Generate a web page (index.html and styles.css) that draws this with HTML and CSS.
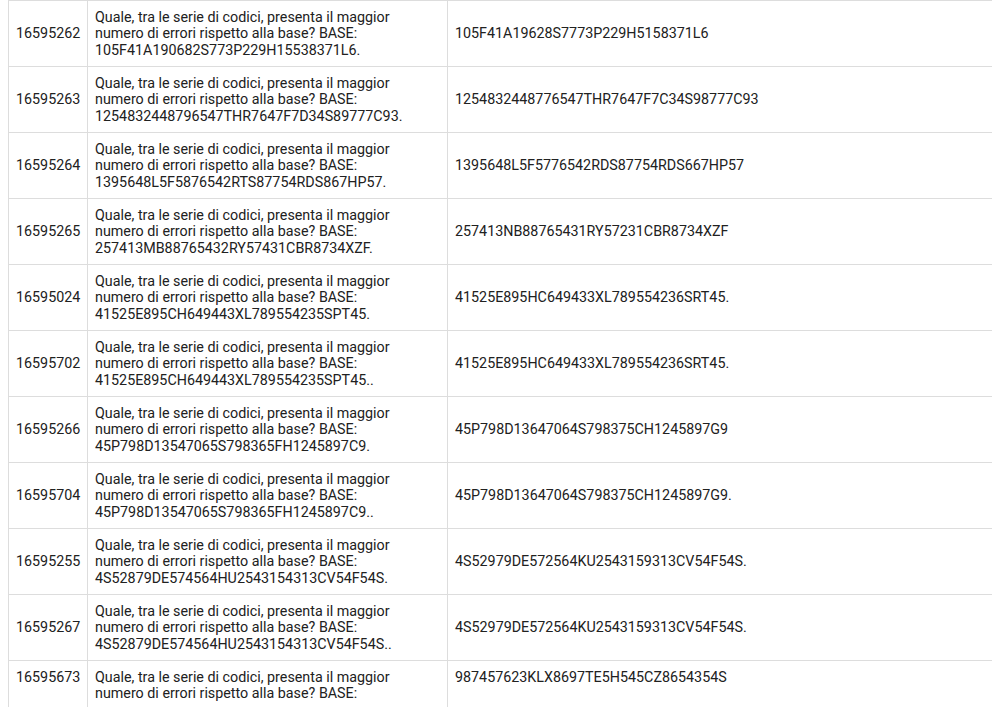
FILE: index.html
```html
<!DOCTYPE html>
<html lang="it">
<head>
  <meta charset="UTF-8" />
  <title>Domande - Serie di codici</title>
  <link rel="stylesheet" href="styles.css">
</head>
<body>

<table class="quiz">
  <colgroup>
    <col class="col-id">
    <col class="col-domanda">
    <col class="col-risposta">
  </colgroup>
  <tbody>
    <tr>
      <td>16595262</td>
      <td>Quale, tra le serie di codici, presenta il maggior numero di errori rispetto alla base? BASE: 105F41A190682S773P229H15538371L6.</td>
      <td>105F41A19628S7773P229H5158371L6</td>
    </tr>
    <tr>
      <td>16595263</td>
      <td>Quale, tra le serie di codici, presenta il maggior numero di errori rispetto alla base? BASE: 1254832448796547THR7647F7D34S89777C93.</td>
      <td>1254832448776547THR7647F7C34S98777C93</td>
    </tr>
    <tr>
      <td>16595264</td>
      <td>Quale, tra le serie di codici, presenta il maggior numero di errori rispetto alla base? BASE: 1395648L5F5876542RTS87754RDS867HP57.</td>
      <td>1395648L5F5776542RDS87754RDS667HP57</td>
    </tr>
    <tr>
      <td>16595265</td>
      <td>Quale, tra le serie di codici, presenta il maggior numero di errori rispetto alla base? BASE: 257413MB88765432RY57431CBR8734XZF.</td>
      <td>257413NB88765431RY57231CBR8734XZF</td>
    </tr>
    <tr>
      <td>16595024</td>
      <td>Quale, tra le serie di codici, presenta il maggior numero di errori rispetto alla base? BASE: 41525E895CH649443XL789554235SPT45.</td>
      <td>41525E895HC649433XL789554236SRT45.</td>
    </tr>
    <tr>
      <td>16595702</td>
      <td>Quale, tra le serie di codici, presenta il maggior numero di errori rispetto alla base? BASE: 41525E895CH649443XL789554235SPT45..</td>
      <td>41525E895HC649433XL789554236SRT45.</td>
    </tr>
    <tr>
      <td>16595266</td>
      <td>Quale, tra le serie di codici, presenta il maggior numero di errori rispetto alla base? BASE: 45P798D13547065S798365FH1245897C9.</td>
      <td>45P798D13647064S798375CH1245897G9</td>
    </tr>
    <tr>
      <td>16595704</td>
      <td>Quale, tra le serie di codici, presenta il maggior numero di errori rispetto alla base? BASE: 45P798D13547065S798365FH1245897C9..</td>
      <td>45P798D13647064S798375CH1245897G9.</td>
    </tr>
    <tr>
      <td>16595255</td>
      <td>Quale, tra le serie di codici, presenta il maggior numero di errori rispetto alla base? BASE: 4S52879DE574564HU2543154313CV54F54S.</td>
      <td>4S52979DE572564KU2543159313CV54F54S.</td>
    </tr>
    <tr>
      <td>16595267</td>
      <td>Quale, tra le serie di codici, presenta il maggior numero di errori rispetto alla base? BASE: 4S52879DE574564HU2543154313CV54F54S..</td>
      <td>4S52979DE572564KU2543159313CV54F54S.</td>
    </tr>
    <tr class="top">
      <td>16595673</td>
      <td>Quale, tra le serie di codici, presenta il maggior numero di errori rispetto alla base? BASE:</td>
      <td>987457623KLX8697TE5H545CZ8654354S</td>
    </tr>
  </tbody>
</table>

</body>
</html>
```

FILE: styles.css
```css
body {
  font-family: Roboto, "Liberation Sans", sans-serif;
  font-size: 14.3px;
  color: #212121;
  background: white;
  margin: 0 8px;
}
.quiz {
  width: 987px;
  border-collapse: collapse;
  table-layout: fixed;
}
.col-id {
  width: 79px;
}
.col-domanda {
  width: 360px;
}
.quiz td {
  border: 1px solid #dddddd;
  padding: 7.5px 7px 8px;
  line-height: 16.5px;
  vertical-align: middle;
  text-align: left;
}
.quiz tr.top td {
  vertical-align: top;
}
```
